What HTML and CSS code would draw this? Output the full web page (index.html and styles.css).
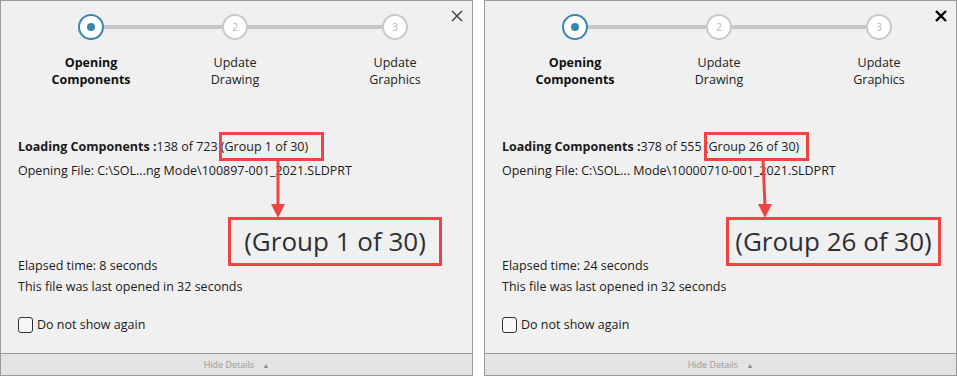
FILE: index.html
```html
<!DOCTYPE html>
<html lang="en">
<head>
    <meta charset="UTF-8">
    <title>Opening Components</title>
    <link rel="stylesheet" href="styles.css">
</head>
<body>
    <div class="page">
        <!-- Left dialog -->
        <div class="dialog">
            <svg class="close" width="12" height="12" viewBox="0 0 12 12">
                <path d="M1 1 L11 11 M11 1 L1 11" stroke="#4a4a4a" stroke-width="1.6"/>
            </svg>
            <div class="stepper">
                <div class="dots">
                    <span class="dot active"><span class="core"></span></span>
                    <span class="track first"></span>
                    <span class="dot">2</span>
                    <span class="track second"></span>
                    <span class="dot">3</span>
                </div>
                <div class="labels">
                    <div class="label current">Opening<br>Components</div>
                    <div class="label">Update<br>Drawing</div>
                    <div class="label">Update<br>Graphics</div>
                </div>
            </div>

            <div class="details">
                <p class="line"><b>Loading Components :</b>138 of 723 (Group 1 of 30)</p>
                <p class="line">Opening File: C:\SOL...ng Mode\100897-001_2021.SLDPRT</p>
                <div class="spacer"></div>
                <p class="line tight">Elapsed time: 8 seconds</p>
                <p class="line tight">This file was last opened in 32 seconds</p>
                <label class="check"><span class="box"></span>Do not show again</label>
            </div>

            <div class="footer">Hide Details <span class="caret">&#9650;</span></div>

            <!-- annotation -->
            <div class="mark small" style="left: 218px; width: 105px;"></div>
            <svg class="arrow" style="left: 268px;" width="20" height="60" viewBox="0 0 20 60">
                <line x1="9" y1="0" x2="9" y2="46" stroke="#ef4444" stroke-width="3"/>
                <polygon points="2,44 16,44 9,58" fill="#ef4444"/>
            </svg>
            <div class="mark big" style="left: 227px; width: 214px;">(Group 1 of 30)</div>
        </div>

        <!-- Right dialog -->
        <div class="dialog">
            <svg class="close" width="12" height="12" viewBox="0 0 12 12">
                <path d="M1 1 L11 11 M11 1 L1 11" stroke="#000" stroke-width="2.4"/>
            </svg>
            <div class="stepper">
                <div class="dots">
                    <span class="dot active"><span class="core"></span></span>
                    <span class="track first"></span>
                    <span class="dot">2</span>
                    <span class="track second"></span>
                    <span class="dot">3</span>
                </div>
                <div class="labels">
                    <div class="label current">Opening<br>Components</div>
                    <div class="label">Update<br>Drawing</div>
                    <div class="label">Update<br>Graphics</div>
                </div>
            </div>

            <div class="details">
                <p class="line"><b>Loading Components :</b>378 of 555 (Group 26 of 30)</p>
                <p class="line">Opening File: C:\SOL... Mode\10000710-001_2021.SLDPRT</p>
                <div class="spacer"></div>
                <p class="line tight">Elapsed time: 24 seconds</p>
                <p class="line tight">This file was last opened in 32 seconds</p>
                <label class="check"><span class="box"></span>Do not show again</label>
            </div>

            <div class="footer">Hide Details <span class="caret">&#9650;</span></div>

            <!-- annotation -->
            <div class="mark small" style="left: 219px; width: 105px;"></div>
            <svg class="arrow" style="left: 270px;" width="20" height="60" viewBox="0 0 20 60">
                <line x1="8" y1="0" x2="10" y2="46" stroke="#ef4444" stroke-width="3"/>
                <polygon points="3,44 17,44 10,58" fill="#ef4444"/>
            </svg>
            <div class="mark big" style="left: 241px; width: 215px;">(Group 26 of 30)</div>
        </div>
    </div>
</body>
</html>
```

FILE: styles.css
```css
body {
    margin: 0;
    background: #ffffff;
    font-family: "Open Sans", "Noto Sans", sans-serif;
    color: #1a1a1a;
}

.page {
    display: flex;
    gap: 11px;
    width: 957px;
    height: 376px;
}

.dialog {
    position: relative;
    box-sizing: border-box;
    width: 473px;
    height: 376px;
    border: 1px solid #9a9a9a;
    background: #f0f0f0;
    display: flex;
    flex-direction: column;
}

.close {
    position: absolute;
    top: 9px;
    right: 9px;
}

/* stepper */
.stepper {
    padding-top: 13px;
}

.dots {
    display: flex;
    align-items: center;
    padding-left: 77px;
    height: 26px;
}

.dot {
    box-sizing: border-box;
    width: 26px;
    height: 26px;
    border-radius: 50%;
    border: 2px solid #c9c9c9;
    background: #fff;
    display: flex;
    align-items: center;
    justify-content: center;
    font-size: 10px;
    color: #b8b8b8;
}

.dot.active {
    border-color: #3a87ad;
}

.core {
    width: 8px;
    height: 8px;
    border-radius: 50%;
    background: #3a87ad;
}

.track {
    height: 4px;
    background: #c6c6c6;
}

.track.first {
    width: 118px;
}

.track.second {
    width: 134px;
}

.labels {
    display: flex;
    padding-left: 30px;
    margin-top: 14px;
}

.label {
    width: 120px;
    text-align: center;
    font-size: 12.5px;
    line-height: 17px;
    color: #222;
}

.label + .label {
    margin-left: 24px;
}

.label + .label + .label {
    margin-left: 40px;
}

.label.current {
    font-weight: bold;
    color: #111;
}

/* details */
.details {
    flex: 1;
    padding: 50px 0 0 17px;
}

.line {
    margin: 0 0 7px;
    font-size: 12.5px;
    line-height: 17px;
    white-space: nowrap;
}

.line.tight {
    margin-bottom: 4px;
}

.spacer {
    height: 71px;
}

.check {
    display: flex;
    align-items: center;
    margin-top: 21px;
    font-size: 12.5px;
}

.box {
    box-sizing: border-box;
    width: 15px;
    height: 16px;
    border: 1px solid #333;
    border-radius: 3px;
    background: #f7f7f7;
    margin-right: 4px;
}

.footer {
    height: 21px;
    border-top: 1px solid #9a9a9a;
    background: #e3e3e3;
    text-align: center;
    font-size: 9px;
    line-height: 21px;
    color: #9a9a9a;
}

.caret {
    font-size: 7px;
    margin-left: 6px;
    color: #8a8a8a;
}

/* annotations */
.mark {
    position: absolute;
    box-sizing: border-box;
    border: 3px solid #ef4444;
}

.mark.small {
    top: 131px;
    height: 29px;
}

.mark.big {
    top: 216px;
    height: 49px;
    font-size: 26px;
    line-height: 43px;
    text-align: center;
    color: #2e2e36;
    background: #f0f0f0;
}

.arrow {
    position: absolute;
    top: 159px;
}
```
